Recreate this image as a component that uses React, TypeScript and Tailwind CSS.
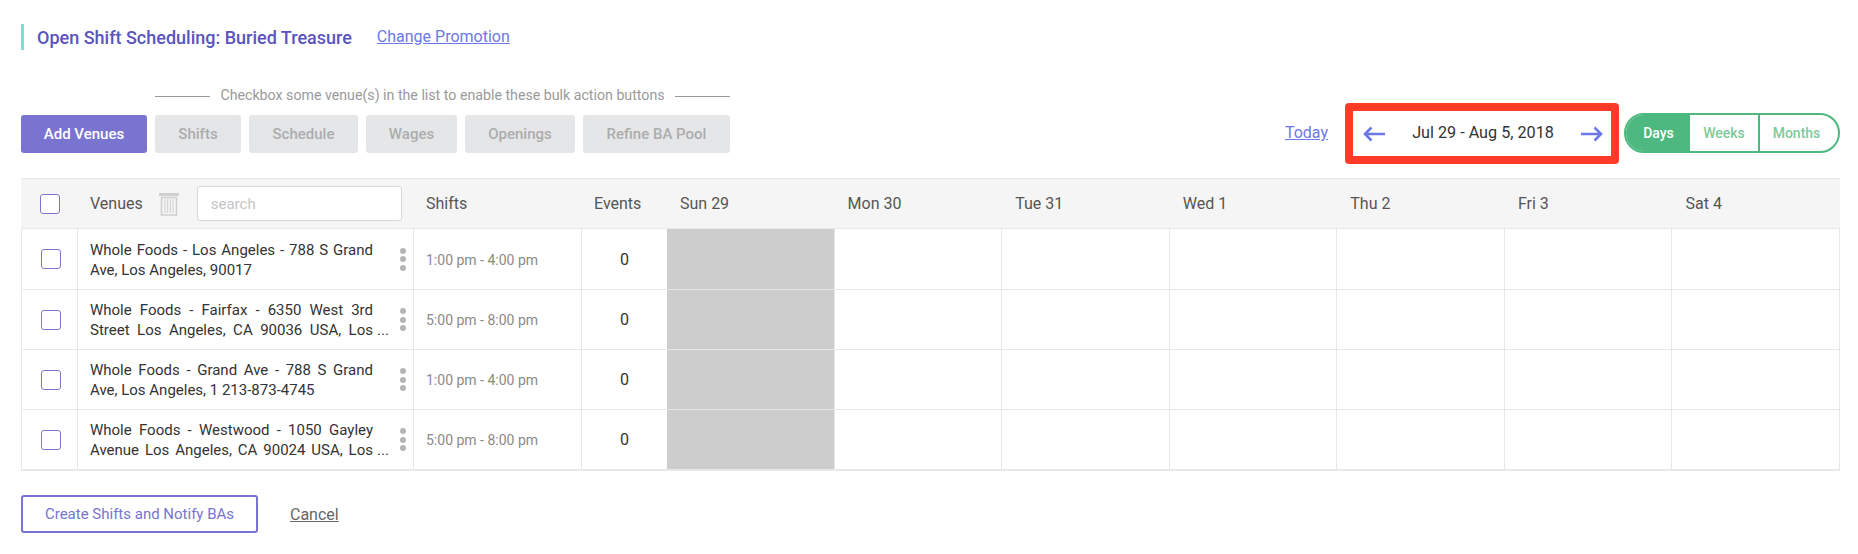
import React from 'react';

const days = ['Sun 29', 'Mon 30', 'Tue 31', 'Wed 1', 'Thu 2', 'Fri 3', 'Sat 4'];

// cut = the source text runs past two lines, so the row shows a trailing "..."
const venues = [
  { name: 'Whole Foods - Los Angeles - 788 S Grand Ave, Los Angeles, 90017', shift: '1:00 pm - 4:00 pm', cut: false, height: 'h-[61px]' },
  { name: 'Whole Foods - Fairfax - 6350 West 3rd Street Los Angeles, CA 90036 USA, Los', shift: '5:00 pm - 8:00 pm', cut: true, height: 'h-[60px]' },
  { name: 'Whole Foods - Grand Ave - 788 S Grand Ave, Los Angeles, 1 213-873-4745', shift: '1:00 pm - 4:00 pm', cut: false, height: 'h-[60px]' },
  { name: 'Whole Foods - Westwood - 1050 Gayley Avenue Los Angeles, CA 90024 USA, Los', shift: '5:00 pm - 8:00 pm', cut: true, height: 'h-[59px]' },
];

const bulkActions = [
  { label: 'Shifts', width: 'w-[86px]' },
  { label: 'Schedule', width: 'w-[109px]' },
  { label: 'Wages', width: 'w-[91px]' },
  { label: 'Openings', width: 'w-[110px]' },
  { label: 'Refine BA Pool', width: 'w-[147px]' },
];

const TrashIcon = () => (
  <svg width="20" height="24" viewBox="0 0 20 24" fill="none" stroke="#cfcfcf" className="block">
    <rect x="0" y="1" width="20" height="3" fill="#cfcfcf" stroke="none" />
    <path d="M2.5 5.5h15V23h-15z" strokeWidth="1.5" />
    <path d="M6 7v14M8.7 7v14M11.3 7v14M14 7v14" strokeWidth="1" />
  </svg>
);

const LeftArrow = () => (
  <svg width="22" height="16" viewBox="0 0 22 16" fill="none" stroke="#6b79e8" strokeWidth="2.6" className="block">
    <path d="M8.5 1.5L2 8l6.5 6.5M2 8h20" />
  </svg>
);

const RightArrow = () => (
  <svg width="22" height="16" viewBox="0 0 22 16" fill="none" stroke="#6b79e8" strokeWidth="2.6" className="block">
    <path d="M13.5 1.5L20 8l-6.5 6.5M20 8H0" />
  </svg>
);

const Checkbox = () => (
  <div className="w-[20px] h-[20px] rounded-[3px] border border-[#7a75d0] bg-white" />
);

const App: React.FC = () => {
  return (
    <div className="w-[1858px] h-[554px] bg-white pl-[21px] pr-[18px] font-['Roboto',sans-serif] overflow-hidden">
      {/* Title */}
      <div className="pt-[24px] flex items-center h-[50px]">
        <div className="h-[26px] border-l-[3px] border-[#7fdcd6] pl-[13px] flex items-center text-[18px] font-medium text-[#5b54bf]">
          Open Shift Scheduling: Buried Treasure
        </div>
        <a className="ml-[25px] text-[16px] text-[#6b79e8] underline">Change Promotion</a>
      </div>

      {/* Toolbar */}
      <div className="mt-[38px] flex items-start justify-between h-[90px]">
        <div>
          <div className="ml-[134px] w-[575px] h-[16px] flex items-center gap-[10px] text-[14.2px] text-[#9a9a9a]">
            <div className="flex-1 h-px bg-[#999999]" />
            <span>Checkbox some venue(s) in the list to enable these bulk action buttons</span>
            <div className="flex-1 h-px bg-[#999999]" />
          </div>
          <div className="mt-[11px] flex gap-[8px]">
            <button className="w-[126px] h-[38px] rounded-[3px] bg-[#7874d0] text-white text-[15px] font-medium">Add Venues</button>
            {bulkActions.map((a) => (
              <button key={a.label} className={`${a.width} h-[38px] rounded-[3px] bg-[#e5e6e8] text-[#adadad] text-[15px] font-medium`}>
                {a.label}
              </button>
            ))}
          </div>
        </div>

        <div className="flex items-start mt-[15px]">
          <a className="mt-[20px] mr-[17px] text-[16px] text-[#6b79e8] underline leading-[20px]">Today</a>
          <div className="w-[274px] h-[61px] rounded-[4px] border-[8px] border-[#ff3b28] flex items-center justify-between pl-[10px] pr-[8px] bg-white">
            <LeftArrow />
            <span className="text-[16.2px] text-[#333333]">Jul 29 - Aug 5, 2018</span>
            <RightArrow />
          </div>
          <div className="ml-[5px] mt-[10px] w-[216px] h-[40px] rounded-full border-2 border-[#4eb881] flex overflow-hidden text-[14px] font-medium">
            <div className="w-[64px] pl-[1px] bg-[#4eb881] text-white flex items-center justify-center">Days</div>
            <div className="w-[68px] text-[#7ccba1] flex items-center justify-center">Weeks</div>
            <div className="flex-1 pr-[5px] border-l-2 border-[#4eb881] text-[#7ccba1] flex items-center justify-center">Months</div>
          </div>
        </div>
      </div>

      {/* Table */}
      <div className="w-[1819px] border-b-2 border-[#e8e8e8]">
        <div className="flex h-[51px] bg-[#f5f5f5] border-y border-[#e8e8e8] text-[16px] text-[#555555] items-center">
          <div className="w-[56px] pl-[19px] shrink-0"><Checkbox /></div>
          <div className="w-[336px] pl-[13px] shrink-0 flex items-center">
            <span className="pt-[1px]">Venues</span>
            <span className="ml-[16px]"><TrashIcon /></span>
            <input
              placeholder="search"
              className="ml-[18px] w-[205px] h-[35px] rounded-[3px] border border-[#d8d8d8] bg-white px-[13px] text-[15px] placeholder:text-[#c4c4c4] outline-none"
            />
          </div>
          <div className="w-[168px] pl-[13px] pt-[1px] shrink-0">Shifts</div>
          <div className="w-[86px] pl-[13px] pt-[1px] shrink-0">Events</div>
          {days.map((d) => (
            <div key={d} className="flex-1 pl-[13px] pt-[1px]">{d}</div>
          ))}
        </div>
        {venues.map((v) => (
          <div key={v.name} className={`flex ${v.height} border-b border-[#e8e8e8] last:border-b-0`}>
            <div className="w-[56px] pl-[19px] shrink-0 flex items-center border-l border-[#e8e8e8]"><Checkbox /></div>
            <div className="w-[336px] pl-[12px] shrink-0 flex items-center border-l border-[#e8e8e8]">
              <div className={`relative w-[283px] mt-[1px] text-[15px] leading-[20px] text-[#333333] text-justify ${v.cut ? '[text-align-last:justify]' : ''}`}>
                {v.name}
                {v.cut && <span className="absolute left-[287px] bottom-0">...</span>}
              </div>
              <div className="ml-[27px] flex flex-col gap-[2.5px]">
                <div className="w-[6px] h-[6px] rounded-full bg-[#b5b5b5]" />
                <div className="w-[6px] h-[6px] rounded-full bg-[#b5b5b5]" />
                <div className="w-[6px] h-[6px] rounded-full bg-[#b5b5b5]" />
              </div>
            </div>
            <div className="w-[168px] pl-[12px] pt-[2px] shrink-0 flex items-center border-l border-[#e8e8e8] text-[14px] text-[#8a8a8a]">{v.shift}</div>
            <div className="w-[86px] pt-[1px] shrink-0 flex items-center justify-center border-l border-[#e8e8e8] text-[16px] text-[#333333]">0</div>
            {days.map((d, i) => (
              <div key={d} className={i === 0 ? 'flex-1 bg-[#cdcdcd]' : 'flex-1 border-l border-[#e8e8e8] last:border-r'} />
            ))}
          </div>
        ))}
      </div>

      {/* Footer */}
      <div className="mt-[24px] flex items-center">
        <button className="w-[237px] h-[38px] rounded-[3px] border-2 border-[#7874d0] text-[#7874d0] text-[15px]">Create Shifts and Notify BAs</button>
        <a className="ml-[32px] mt-[1px] text-[16px] text-[#666666] underline">Cancel</a>
      </div>
    </div>
  );
};

export default App;
